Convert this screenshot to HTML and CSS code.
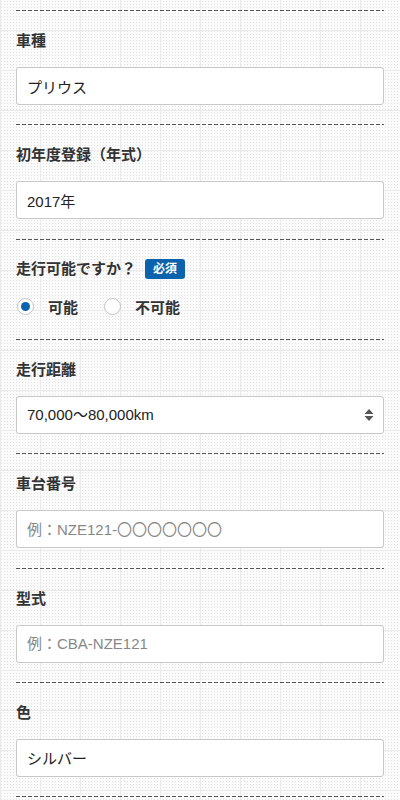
FILE: index.html
```html
<!DOCTYPE html>
<html lang="ja">

<head>
    <meta charset="UTF-8">
    <meta name="viewport" content="width=device-width, initial-scale=1">
    <title>車両情報</title>
    <link rel="stylesheet" href="styles.css">
</head>

<body>
    <div class="form">
        <div class="form-item">
            <div class="form-label">車種</div>
            <input class="form-input" type="text" value="プリウス">
        </div>

        <div class="form-item">
            <div class="form-label">初年度登録（年式）</div>
            <input class="form-input" type="text" value="2017年">
        </div>

        <div class="form-item form-item-radio">
            <div class="form-label">走行可能ですか？<span class="badge">必須</span></div>
            <div class="radio-group">
                <label class="radio"><input type="radio" name="run" checked><span>可能</span></label>
                <label class="radio"><input type="radio" name="run"><span>不可能</span></label>
            </div>
        </div>

        <div class="form-item">
            <div class="form-label">走行距離</div>
            <div class="select-wrap">
                <select class="form-input form-select">
                    <option>70,000〜80,000km</option>
                </select>
                <svg class="select-arrow" width="10" height="14" viewBox="0 0 10 14">
                    <path d="M5 1 L9.5 6 L0.5 6 Z" fill="#555"/>
                    <path d="M5 13 L9.5 8 L0.5 8 Z" fill="#555"/>
                </svg>
            </div>
        </div>

        <div class="form-item">
            <div class="form-label">車台番号</div>
            <input class="form-input" type="text" placeholder="例：NZE121-〇〇〇〇〇〇〇">
        </div>

        <div class="form-item">
            <div class="form-label">型式</div>
            <input class="form-input" type="text" placeholder="例：CBA-NZE121">
        </div>

        <div class="form-item">
            <div class="form-label">色</div>
            <input class="form-input" type="text" value="シルバー">
        </div>
        <div class="form-end"></div>
    </div>
</body>

</html>
```

FILE: styles.css
```css
* {
    margin: 0;
    padding: 0;
    box-sizing: border-box;
}

html,
body {
    height: 100%;
}

body {
    font-family: "Liberation Sans", "Noto Sans CJK JP", sans-serif;
    color: #333;
    background-color: #fbfbfb;
    background-image:
        linear-gradient(90deg, #ebebeb 1px, transparent 1px),
        linear-gradient(#ebebeb 1px, transparent 1px),
        radial-gradient(circle, #e2e2e2 0.7px, transparent 0.9px);
    background-size: 40px 40px, 40px 40px, 3px 3px;
    background-position: 0 0, 0 30px, 0 0;
    padding: 10px 16px 0;
    overflow: hidden;
}

.form-item,
.form-end {
    background-image: repeating-linear-gradient(90deg, #555 0 4px, transparent 4px 6px);
    background-size: 100% 1px;
    background-repeat: no-repeat;
    background-position: top left;
}

.form-item {
    padding: 21px 0 19.4px;
}

.form-end {
    height: 1px;
}

.form-label {
    display: flex;
    align-items: center;
    font-size: 15px;
    font-weight: bold;
    line-height: 20px;
    height: 20px;
    margin-bottom: 16px;
    color: #333;
}

.badge {
    display: inline-block;
    margin-left: 9px;
    width: 40px;
    height: 20px;
    line-height: 20px;
    text-align: center;
    background-color: #0b63ae;
    color: #fff;
    font-size: 12px;
    border-radius: 3px;
}

.form-input {
    display: block;
    width: 100%;
    height: 38px;
    border: 1px solid #c8c8c8;
    border-radius: 3px;
    background: #fff;
    padding: 0 10px;
    font-family: "Liberation Sans", "Noto Sans CJK JP", sans-serif;
    font-size: 15px;
    color: #222;
    outline: none;
}

.form-input::placeholder {
    color: #888;
}

.select-wrap {
    position: relative;
}

.form-select {
    appearance: none;
    -webkit-appearance: none;
}

.select-arrow {
    position: absolute;
    right: 10px;
    top: 12px;
}

.form-item-radio {
    padding-top: 20px;
    padding-bottom: 21px;
}

.form-item-radio .form-label {
    margin-bottom: 17px;
}

.radio-group {
    display: flex;
    height: 22px;
    align-items: center;
}

.radio {
    display: flex;
    align-items: center;
    font-size: 15px;
    font-weight: bold;
    color: #333;
    margin-right: 25px;
}

.radio input {
    appearance: none;
    -webkit-appearance: none;
    width: 17px;
    height: 17px;
    border: 1px solid #c4c4c4;
    border-radius: 50%;
    background: #fff;
    margin: 0 14px 0 1px;
    position: relative;
}

.radio input:checked::after {
    content: "";
    position: absolute;
    left: 3px;
    top: 3px;
    width: 9px;
    height: 9px;
    border-radius: 50%;
    background: #0b63ae;
}
```
